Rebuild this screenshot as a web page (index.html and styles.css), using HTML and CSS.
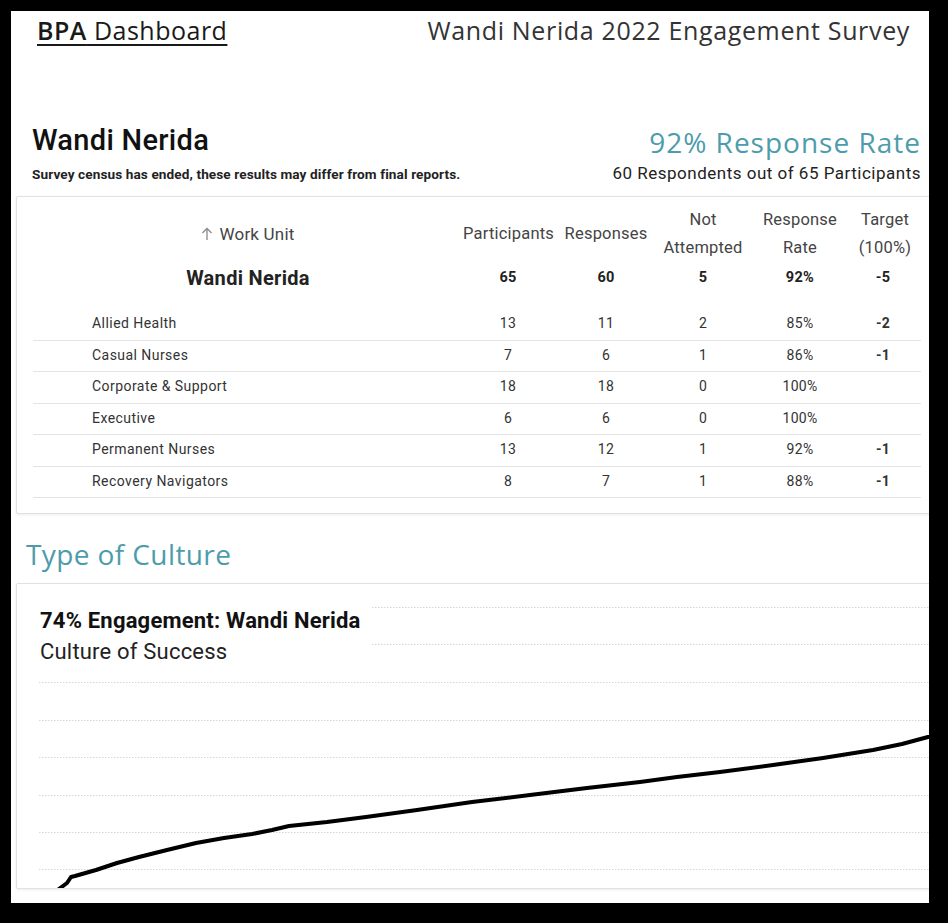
FILE: index.html
```html
<!DOCTYPE html>
<html lang="en">
<head>
<meta charset="utf-8">
<title>BPA Dashboard</title>
<link rel="stylesheet" href="styles.css">
</head>
<body>
<div class="frame">
  <div class="page">
    <header class="topbar">
      <a class="brand" href="#"><b>BPA</b> Dashboard</a>
      <div class="survey-title">Wandi Nerida 2022 Engagement Survey</div>
    </header>

    <section class="summary">
      <div class="summary-left">
        <h1 class="org-name">Wandi Nerida</h1>
        <p class="notice">Survey census has ended, these results may differ from final reports.</p>
      </div>
      <div class="summary-right">
        <div class="rate">92% Response Rate</div>
        <div class="rate-detail">60 Respondents out of 65 Participants</div>
      </div>
    </section>

    <div class="card table-card">
      <table class="units">
        <colgroup>
          <col class="c-unit"><col class="c-part"><col class="c-resp"><col class="c-not"><col class="c-rate"><col class="c-target">
        </colgroup>
        <thead>
          <tr>
            <th class="th-unit"><svg class="sort-arrow" width="12" height="14" viewBox="0 0 12 14"><path d="M6 13V1.5M1.5 6 6 1.5 10.5 6" fill="none" stroke="#8a8a8a" stroke-width="1.3"/></svg>Work Unit</th>
            <th>Participants</th>
            <th>Responses</th>
            <th>Not<br>Attempted</th>
            <th>Response<br>Rate</th>
            <th class="th-target">Target<br>(100%)</th>
          </tr>
        </thead>
        <tbody>
          <tr class="total">
            <td class="unit-total">Wandi Nerida</td>
            <td>65</td><td>60</td><td>5</td><td>92%</td><td class="target">-5</td>
          </tr>
          <tr class="row">
            <td class="unit">Allied Health</td>
            <td>13</td><td>11</td><td>2</td><td>85%</td><td class="target">-2</td>
          </tr>
          <tr class="row">
            <td class="unit">Casual Nurses</td>
            <td>7</td><td>6</td><td>1</td><td>86%</td><td class="target">-1</td>
          </tr>
          <tr class="row">
            <td class="unit">Corporate &amp; Support</td>
            <td>18</td><td>18</td><td>0</td><td>100%</td><td class="target"></td>
          </tr>
          <tr class="row">
            <td class="unit">Executive</td>
            <td>6</td><td>6</td><td>0</td><td>100%</td><td class="target"></td>
          </tr>
          <tr class="row">
            <td class="unit">Permanent Nurses</td>
            <td>13</td><td>12</td><td>1</td><td>92%</td><td class="target">-1</td>
          </tr>
          <tr class="row">
            <td class="unit">Recovery Navigators</td>
            <td>8</td><td>7</td><td>1</td><td>88%</td><td class="target">-1</td>
          </tr>
        </tbody>
      </table>
    </div>

    <h2 class="section-title">Type of Culture</h2>

    <div class="card chart-card">
      <svg class="chart" width="928" height="304" viewBox="0 0 928 304">
        <g class="grid" stroke="#d6d6d6" stroke-width="1" stroke-dasharray="1.5 1.5">
          <line x1="22" y1="23.5" x2="928" y2="23.5"/>
          <line x1="22" y1="60.5" x2="928" y2="60.5"/>
          <line x1="22" y1="98.5" x2="928" y2="98.5"/>
          <line x1="22" y1="136.5" x2="928" y2="136.5"/>
          <line x1="22" y1="173.5" x2="928" y2="173.5"/>
          <line x1="22" y1="211.5" x2="928" y2="211.5"/>
          <line x1="22" y1="248.5" x2="928" y2="248.5"/>
          <line x1="22" y1="285.5" x2="928" y2="285.5"/>
        </g>
        <polyline fill="none" stroke="#000" stroke-width="4" stroke-linejoin="round" stroke-linecap="round"
          points="38,308 50,299 54,293 58,292 79,286 100,279 122,273 150,266 179,259 207,254 235,250 255,246 272,242 310,238 349,233 400,226 455,218 513,211 570,204 623,198 660,193 703,188 756,181 806,174 856,166 885,160 911,153 940,145"/>
      </svg>
      <div class="chart-title">
        <div class="engagement">74% Engagement: Wandi Nerida</div>
        <div class="culture">Culture of Success</div>
      </div>
    </div>
  </div>
</div>
</body>
</html>
```

FILE: styles.css
```css
html, body {
  margin: 0;
  padding: 0;
}

body {
  background: #000;
  font-family: Roboto, "Liberation Sans", Arial, sans-serif;
  color: #222;
}

.frame {
  margin: 11px 0 0 11px;
  width: 918px;
  height: 892px;
  background: #fff;
  overflow: hidden;
}

.page {
  width: 918px;
}

/* top bar */
.topbar {
  display: flex;
  justify-content: space-between;
  align-items: center;
  height: 38px;
  padding: 0 19px 0 26px;
  font-family: "Open Sans", Lato, sans-serif;
}

.brand {
  font-size: 25px;
  letter-spacing: 0.5px;
  color: #1a1a1a;
  text-decoration: underline;
  text-decoration-thickness: 2px;
  text-underline-offset: 4px;
  line-height: 38px;
}

.brand b {
  font-weight: 600;
}

.survey-title {
  font-size: 25px;
  letter-spacing: 0.65px;
  color: #333;
  line-height: 38px;
}

/* summary */
.summary {
  display: flex;
  justify-content: space-between;
  margin-top: 76px;
  padding: 0 8px 0 21px;
}

.org-name {
  margin: 0;
  font-size: 29px;
  letter-spacing: 0.3px;
  line-height: 30px;
  font-weight: 500;
  color: #111;
}

.notice {
  margin: 11px 0 0;
  font-size: 13.6px;
  letter-spacing: 0.1px;
  line-height: 16px;
  font-weight: 700;
  color: #222;
}

.summary-right {
  text-align: right;
  padding-top: 1px;
}

.rate {
  font-family: "Open Sans", Lato, sans-serif;
  font-size: 28px;
  letter-spacing: 1px;
  line-height: 32px;
  color: #4d9cab;
}

.rate-detail {
  margin-top: 5px;
  font-size: 17px;
  letter-spacing: 0.5px;
  line-height: 20px;
  color: #222;
}

/* cards */
.card {
  background: #fff;
  border: 1px solid #e1e1e1;
  box-shadow: 0 1px 3px rgba(0, 0, 0, 0.07);
  border-radius: 2px;
  margin-left: 5px;
  width: 930px;
  box-sizing: border-box;
}

.table-card {
  margin-top: 13px;
  padding: 9px 0 15px 16px;
}

.units {
  width: 888px;
  table-layout: fixed;
  border-collapse: collapse;
  font-size: 14px;
  letter-spacing: 0.3px;
  color: #333;
}

.c-unit { width: 430px; }
.c-part { width: 90px; }
.c-resp { width: 106px; }
.c-not { width: 88px; }
.c-rate { width: 106px; }
.c-target { width: 68px; }

.units th {
  font-weight: 400;
  font-size: 16.5px;
  letter-spacing: 0.2px;
  line-height: 28px;
  color: #444;
  text-align: center;
  padding: 0;
  vertical-align: middle;
  white-space: nowrap;
}

.units th.th-unit {
  font-size: 17px;
}

.units th.th-target {
  padding-right: 4px;
}

.sort-arrow {
  vertical-align: -1px;
  margin-right: 6px;
}

.units td {
  text-align: center;
  padding: 0;
}

.total td {
  font-weight: 700;
  font-size: 14.5px;
  line-height: 24px;
  padding: 4px 0 19px;
  color: #222;
}

.total td.unit-total {
  font-size: 20px;
  letter-spacing: 0.3px;
}

.units td.target {
  padding-right: 8px;
}

.row td {
  line-height: 18px;
  padding: 5px 0 7.5px;
  border-bottom: 1px solid #e4e4e4;
}

.row td.unit {
  text-align: left;
  padding-left: 59px;
  letter-spacing: 0.45px;
  color: #333;
}

.row td.target {
  font-weight: 700;
  color: #333;
}

/* culture section */
.section-title {
  margin: 23px 0 0 15px;
  font-family: "Open Sans", Lato, sans-serif;
  font-weight: 400;
  font-size: 28px;
  letter-spacing: 0.4px;
  line-height: 34px;
  color: #4d9cab;
}

.chart-card {
  position: relative;
  margin-top: 12px;
  height: 306px;
  overflow: hidden;
}

.chart {
  display: block;
}

.chart-title {
  position: absolute;
  top: 0;
  left: 0;
  width: 332px;
  height: 64px;
  padding: 21px 0 0 23px;
  background: #fff;
}

.engagement {
  font-size: 22px;
  letter-spacing: 0.2px;
  line-height: 31px;
  font-weight: 700;
  color: #111;
}

.culture {
  font-size: 22px;
  letter-spacing: 0.2px;
  line-height: 31px;
  color: #222;
}
```
